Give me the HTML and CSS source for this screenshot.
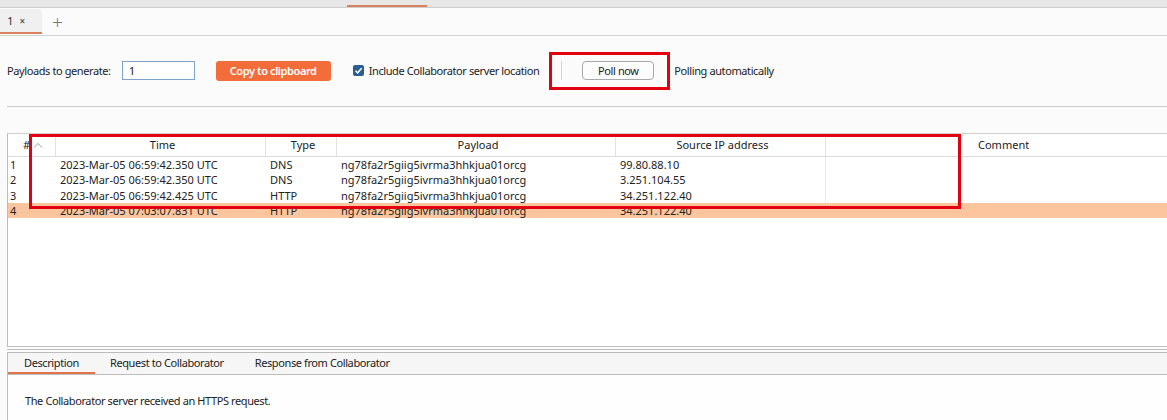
FILE: index.html
```html
<!DOCTYPE html>
<html>
<head>
<meta charset="utf-8">
<link rel="stylesheet" href="styles.css">
</head>
<body>
<div class="topstrip"><span class="topsel"></span></div>
<div class="tabrow">
  <div class="tab">1 <span class="x">×</span></div>
  <div class="plus">+</div>
</div>
<div class="controls">
  <span class="label">Payloads to generate:</span>
  <div class="input">1</div>
  <button class="copy">Copy to clipboard</button>
  <label class="check"><span class="cb"><svg width="9" height="9" viewBox="0 0 9 9"><path d="M1.5 4.8 L3.6 6.8 L7.6 2.2" fill="none" stroke="#fff" stroke-width="1.5"/></svg></span>Include Collaborator server location</label>
  <div class="pollbox">
    <span class="sep"></span>
    <button class="poll">Poll now</button>
  </div>
  <span class="label auto">Polling automatically</span>
</div>
<div class="divider"></div>
<div class="tablewrap">
  <div class="table">
    <div class="row head">
      <div class="c c0"><span class="hash">#</span><svg class="sort" width="10" height="6" viewBox="0 0 10 6"><path d="M1 5.5 L5 1.5 L9 5.5" fill="none" stroke="#9a9a9a" stroke-width="1"/></svg></div>
      <div class="c c1">Time</div>
      <div class="c c2">Type</div>
      <div class="c c3">Payload</div>
      <div class="c c4">Source IP address</div>
      <div class="c c5">Comment</div>
    </div>
    <div class="row">
      <div class="c c0">1</div><div class="c c1">2023-Mar-05 06:59:42.350 UTC</div><div class="c c2">DNS</div><div class="c c3">ng78fa2r5giig5ivrma3hhkjua01orcg</div><div class="c c4">99.80.88.10</div><div class="c c5"></div>
    </div>
    <div class="row">
      <div class="c c0">2</div><div class="c c1">2023-Mar-05 06:59:42.350 UTC</div><div class="c c2">DNS</div><div class="c c3">ng78fa2r5giig5ivrma3hhkjua01orcg</div><div class="c c4">3.251.104.55</div><div class="c c5"></div>
    </div>
    <div class="row">
      <div class="c c0">3</div><div class="c c1">2023-Mar-05 06:59:42.425 UTC</div><div class="c c2">HTTP</div><div class="c c3">ng78fa2r5giig5ivrma3hhkjua01orcg</div><div class="c c4">34.251.122.40</div><div class="c c5"></div>
    </div>
    <div class="row sel">
      <div class="c c0">4</div><div class="c c1">2023-Mar-05 07:03:07.831 UTC</div><div class="c c2">HTTP</div><div class="c c3">ng78fa2r5giig5ivrma3hhkjua01orcg</div><div class="c c4">34.251.122.40</div><div class="c c5"></div>
    </div>
  </div>
  <div class="redtable"></div>
</div>
<div class="split"></div>
<div class="pane">
  <div class="ptabs">
    <div class="ptab active">Description</div>
    <div class="ptab">Request to Collaborator</div>
    <div class="ptab">Response from Collaborator</div>
  </div>
  <div class="pbody">The Collaborator server received an HTTPS request.</div>
</div>
</body>
</html>
```
FILE: styles.css
```css
* { box-sizing: border-box; }
html, body { margin: 0; padding: 0; }
body {
  width: 1167px;
  height: 420px;
  overflow: hidden;
  background: #fbfbfb;
  color: #222;
  font-family: "Noto Sans", "DejaVu Sans", sans-serif;
  font-size: 11px;
}
.topstrip {
  height: 8px;
  background: #e6e6e6;
  border-bottom: 1px solid #cfcfcf;
  padding-left: 347px;
  display: flex;
  align-items: flex-end;
}
.topsel {
  width: 80px;
  height: 2px;
  background: #d9805e;
}
.tabrow {
  height: 28px;
  border-bottom: 1px solid #d2d2d2;
  display: flex;
  align-items: stretch;
}
.tab {
  width: 42px;
  background: #f0f0f0;
  border-bottom: 2px solid #d9805e;
  border-radius: 0 4px 0 0;
  padding-left: 7px;
  display: flex;
  align-items: center;
  font-size: 11.5px;
  color: #333;
  height: 25px;
  margin-top: 1px;
}
.tab .x { font-size: 10px; margin-left: 6px; }
.plus {
  margin-left: 10px;
  font-size: 19px;
  color: #777;
  display: flex;
  align-items: center;
  height: 28px;
  font-weight: 300;
}
.controls {
  display: flex;
  align-items: center;
  padding: 15px 0 16px 7px;
  height: 70px;
  letter-spacing: -0.4px;
}
.label { color: #222; white-space: nowrap; }
.input {
  margin-left: 11px;
  width: 73px;
  height: 19px;
  border: 1px solid #7fa2cc;
  background: #fff;
  padding-left: 6px;
  line-height: 17px;
  font-size: 11.5px;
}
.copy {
  margin-left: 21px;
  width: 115px;
  height: 20px;
  background: #f36d3b;
  color: #fff;
  border: none;
  border-radius: 3px;
  font-family: inherit;
  font-weight: 600;
  font-size: 11px;
  letter-spacing: -0.4px;
  padding: 0;
}
.check {
  margin-left: 22px;
  display: flex;
  align-items: center;
  white-space: nowrap;
}
.cb {
  width: 11px;
  height: 11px;
  background: #2c5e96;
  border-radius: 2px;
  margin-right: 5px;
  display: flex;
  align-items: center;
  justify-content: center;
}
.cb svg { display: block; }
.pollbox {
  margin-left: 10px;
  width: 121px;
  height: 38px;
  border: 3px solid #e3000f;
  display: flex;
  align-items: center;
  padding-left: 9px;
}
.sep {
  width: 1px;
  height: 19px;
  background: #d4d4d4;
}
.poll {
  margin-left: 20px;
  width: 72px;
  height: 19px;
  background: #fdfdfd;
  border: 1px solid #a9a9a9;
  border-radius: 4px;
  font-family: inherit;
  font-size: 11px;
  letter-spacing: -0.4px;
  color: #222;
  padding: 0;
}
.auto { margin-left: 4px; }
.divider {
  margin-left: 7px;
  height: 1px;
  background: #cbcbcb;
}
.tablewrap {
  position: relative;
  margin-top: 26px;
  margin-left: 7px;
  height: 214px;
  border-left: 1px solid #bdbdbd;
  border-top: 1px solid #cfcfcf;
  border-bottom: 1px solid #bdbdbd;
  background: #fff;
}
.table { width: 1200px; }
.row {
  display: grid;
  grid-template-columns: 48px 210px 71px 279px 210px 1fr;
  height: 15.3px;
  line-height: 15px;
  font-size: 11px;
}
.row.head {
  height: 23px;
  line-height: 22px;
  border-bottom: 1px solid #dcdcdc;
  background: #fff;
}
.row.head .c { text-align: center; border-right: 1px solid #e2e2e2; }
.row.head .c0 { display: flex; align-items: center; justify-content: flex-end; padding-right: 12px; }
.row.head .c5 { text-align: left; padding-left: 152px; border-right: none; }
.hash { margin-right: 3px; }
.sort { display: block; }
.c { white-space: nowrap; overflow: hidden; padding-left: 4px; }
.row .c0 { padding-left: 2px; }
.row:not(.head) .c4 { border-right: 1px solid #eeeeee; }
.row.sel { background: #fdc59d; }
.row.sel .c4 { border-right: none; }
.redtable {
  position: absolute;
  left: 21px;
  top: 0;
  width: 932px;
  height: 75px;
  border: 3px solid #e3000f;
}
.split {
  margin-left: 7px;
  height: 6px;
  border-bottom: 1px solid #bdbdbd;
  position: relative;
}
.split::before {
  content: "";
  position: absolute;
  left: 0; right: 0; top: 2px;
  height: 1px;
  background: #bdbdbd;
}
.pane {
  margin-left: 7px;
  border-left: 1px solid #bdbdbd;
  height: 70px;
  letter-spacing: -0.4px;
}
.ptabs {
  display: flex;
  height: 22px;
  background: #f6f6f6;
  border-bottom: 1px solid #bdbdbd;
}
.ptab {
  padding: 0 15px 0 16px;
  line-height: 20px;
  font-size: 11px;
  color: #222;
  border-bottom: 2px solid transparent;
}
.ptab.active { border-bottom-color: #e0734a; width: 87px; }
.ptab:nth-child(2) { padding-left: 15px; padding-right: 15px; }
.pbody {
  background: #fefefe;
  height: 47px;
  padding: 18px 0 0 17px;
  font-size: 11px;
}
```
